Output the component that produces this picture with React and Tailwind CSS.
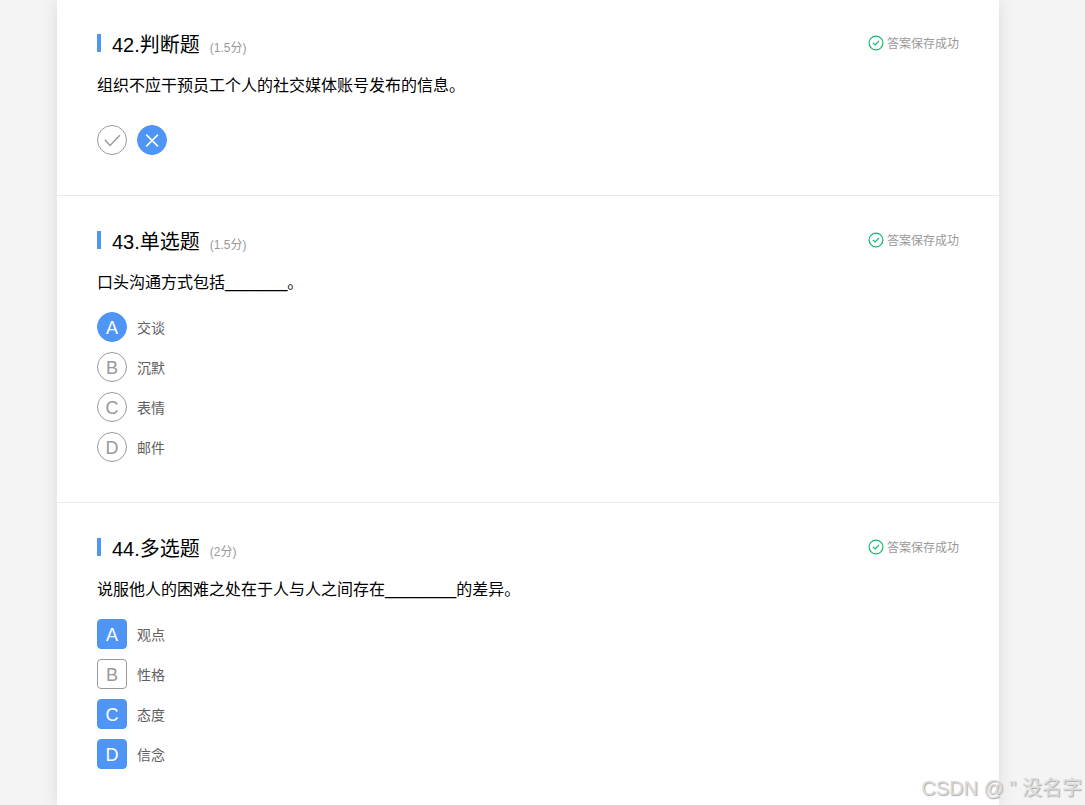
const questions = [
  {
    no: 42,
    type: '判断题',
    score: '1.5分',
    stem: '组织不应干预员工个人的社交媒体账号发布的信息。',
    kind: 'judge',
    options: [
      { key: 'right', text: '正确' },
      { key: 'wrong', text: '错误', picked: true },
    ],
  },
  {
    no: 43,
    type: '单选题',
    score: '1.5分',
    stem: '口头沟通方式包括_______。',
    kind: 'single',
    options: [
      { key: 'A', text: '交谈', picked: true },
      { key: 'B', text: '沉默' },
      { key: 'C', text: '表情' },
      { key: 'D', text: '邮件' },
    ],
  },
  {
    no: 44,
    type: '多选题',
    score: '2分',
    stem: '说服他人的困难之处在于人与人之间存在________的差异。',
    kind: 'multiple',
    options: [
      { key: 'A', text: '观点', picked: true },
      { key: 'B', text: '性格' },
      { key: 'C', text: '态度', picked: true },
      { key: 'D', text: '信念', picked: true },
    ],
  },
];

function SavedIcon() {
  return (
    <svg viewBox="0 0 16 16" className="size-4 text-[#10b96c]" fill="none" stroke="currentColor" aria-hidden="true">
      <circle cx="8" cy="8" r="6.9" strokeWidth="1.2" />
      <path d="M4.8 7.9 7.1 10 11 5.9" strokeWidth="1.2" />
    </svg>
  );
}

function Mark({ name }) {
  return (
    <svg viewBox="0 0 30 30" className="size-full" fill="none" stroke="currentColor" aria-hidden="true">
      {name === 'right' ? (
        <path d="M7.8 14.8 13 20.4 22.8 10.2" strokeWidth="1.4" />
      ) : (
        <path d="M9.2 9.6 21 21.4M21 9.6 9.2 21.4" strokeWidth="1.5" />
      )}
    </svg>
  );
}

const badge =
  'flex size-[30px] items-center justify-center border border-[#999] text-lg text-[#999] peer-checked:border-[#4f95f5] peer-checked:bg-[#4f95f5] peer-checked:text-white';

function Judge({ q }) {
  return (
    <div className="mt-[27px] flex gap-2.5">
      {q.options.map((o) => (
        <label key={o.key} className="relative cursor-pointer">
          <input type="radio" name={`q${q.no}`} aria-label={o.text} defaultChecked={o.picked} className="peer sr-only" />
          <span className={`${badge} rounded-full`}>
            <span className="-m-px size-[30px] shrink-0">
              <Mark name={o.key} />
            </span>
          </span>
        </label>
      ))}
    </div>
  );
}

function Choices({ q }) {
  const multiple = q.kind === 'multiple';
  return (
    <div className="mt-[17px] flex flex-col items-start gap-2.5">
      {q.options.map((o) => (
        <label key={o.key} className="relative flex cursor-pointer items-center gap-2.5">
          <input
            type={multiple ? 'checkbox' : 'radio'}
            name={`q${q.no}`}
            defaultChecked={o.picked}
            className="peer sr-only"
          />
          <span className={`${badge} pt-0.5 ${multiple ? 'rounded' : 'rounded-full'}`}>{o.key}</span>
          <span className="pt-0.5 text-sm text-[#606060]">{o.text}</span>
        </label>
      ))}
    </div>
  );
}

function Question({ q }) {
  return (
    <section className="border-b border-[#ebebeb] px-10 pt-[30px] pb-10">
      <header className="flex h-7 items-center justify-between">
        <div className="flex items-center">
          <span className="h-[18px] w-1 bg-[#4f95f5]" />
          <div className="ml-[11px] flex items-baseline gap-2.5 pt-1">
            <h2 className="text-xl">
              {q.no}.{q.type}
            </h2>
            <span className="text-xs text-[#999]">({q.score})</span>
          </div>
        </div>
        <p className="flex items-center gap-[3px] text-xs text-[#999]">
          <SavedIcon />
          <span className="pt-0.5">答案保存成功</span>
        </p>
      </header>
      <p className="mt-[17px] text-base">{q.stem}</p>
      {q.kind === 'judge' ? <Judge q={q} /> : <Choices q={q} />}
    </section>
  );
}

export default function App() {
  return (
    <div className="relative h-screen overflow-hidden bg-[#f4f4f4] font-['Liberation_Sans','Noto_Sans_CJK_SC',sans-serif] text-black">
      <main className="-mt-px mr-[86px] ml-[57px] min-h-screen bg-white shadow-[0_0_16px_rgba(0,0,0,0.1)]">
        {questions.map((q) => (
          <Question key={q.no} q={q} />
        ))}
      </main>
      <p className="absolute right-[3px] bottom-[3px] text-xl text-[#dcdcdc] [text-shadow:1px_1px_1px_#aaa]">
        CSDN @ " 没名字
      </p>
    </div>
  );
}
